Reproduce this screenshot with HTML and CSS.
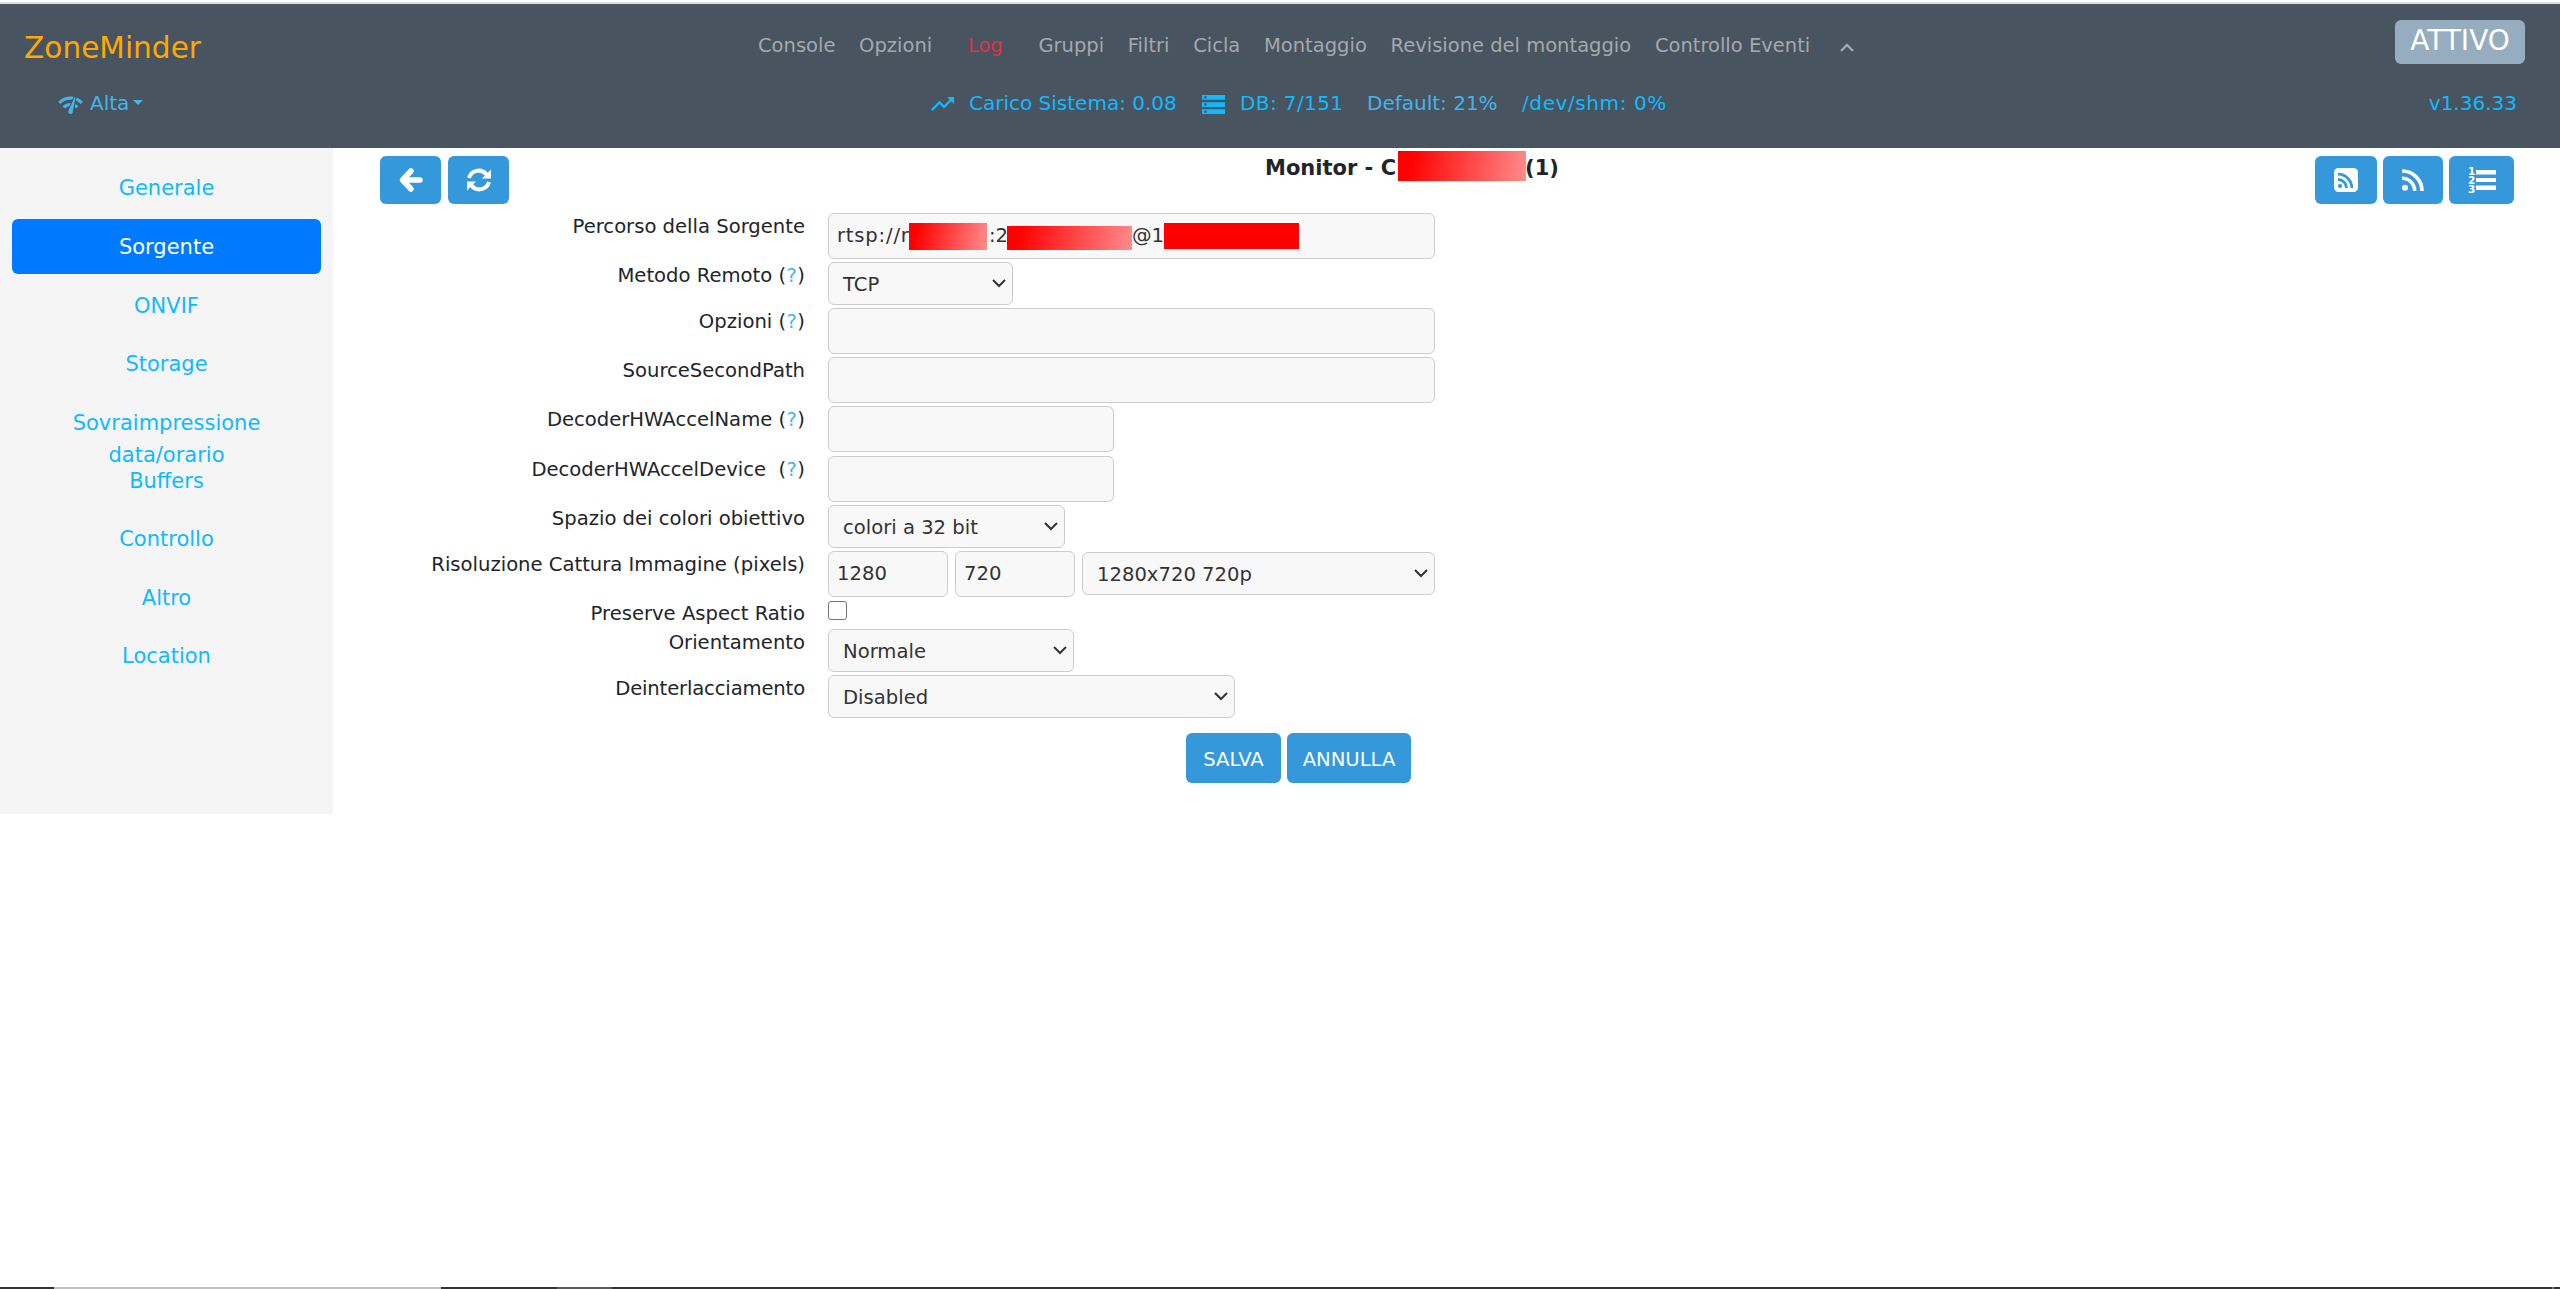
FILE: index.html
```
<!DOCTYPE html>
<html lang="it">
<head>
    <meta charset="UTF-8">
    <title>ZoneMinder - Monitor</title>
    <link rel="stylesheet" href="styles.css">
</head>
<body>
    <header id="header">
        <div class="row navRow">
            <a class="brand">ZoneMinder</a>
            <ul class="nav">
                <li>Console</li>
                <li>Opzioni</li>
                <li class="log">Log</li>
                <li>Gruppi</li>
                <li>Filtri</li>
                <li>Cicla</li>
                <li>Montaggio</li>
                <li>Revisione del montaggio</li>
                <li>Controllo Eventi</li>
                <li class="flip"><svg width="14" height="9" viewBox="0 0 14 9"><path d="M1 8l6-6 6 6" fill="none" stroke="currentColor" stroke-width="2.4"/></svg></li>
            </ul>
            <span class="state">ATTIVO</span>
        </div>
        <div class="row statRow">
            <div class="bandwidth">
                <svg width="25" height="18" viewBox="1 4 22 16"><path fill="currentColor" d="M15.900 5c-.170 0-.320.090-.410.230l-.070.150-5.180 11.650c-.160.290-.260.610-.260.960 0 1.110.900 2.010 2.010 2.010.960 0 1.770-.680 1.960-1.590l.010-.030L16.400 5.500c0-.280-.220-.500-.500-.500zM1 9l2 2c2.880-2.880 6.790-4.080 10.530-3.620l1.190-2.680C9.890 3.840 4.740 5.270 1 9zm20 2l2-2c-1.640-1.640-3.550-2.820-5.590-3.570l-.530 2.820c1.500.620 2.900 1.530 4.120 2.750zm-4 4l2-2c-.800-.800-1.700-1.420-2.660-1.890l-.550 2.920c.420.270.830.590 1.210.970zM5 13l2 2c1.130-1.130 2.560-1.790 4.030-2l1.280-2.880c-2.630-.080-5.300.870-7.310 2.880z"/></svg>
                <span>Alta</span>
                <i class="caret"></i>
            </div>
            <div class="stats">
                <svg class="trend" width="23" height="14" viewBox="2 6 20 12"><path fill="currentColor" d="M16 6l2.290 2.290-4.880 4.880-4-4L2 16.590 3.410 18l6-6 4 4 6.300-6.290L22 12V6z"/></svg>
                <span class="load">Carico Sistema: 0.08</span>
                <svg class="storage" width="23" height="19" viewBox="2 4 20 16" preserveAspectRatio="none"><path fill="currentColor" d="M2 20h20v-4H2v4zm2-3h2v2H4v-2zM2 4v4h20V4H2zm4 3H4V5h2v2zm-4 7h20v-4H2v4zm2-3h2v2H4v-2z"/></svg>
                <span class="db">DB: 7/151</span>
                <span class="disk">Default: 21%</span>
                <span class="shm">/dev/shm: 0%</span>
            </div>
            <span class="version">v1.36.33</span>
        </div>
    </header>
    <div id="page">
        <ul id="sidebar">
            <li>Generale</li>
            <li class="active">Sorgente</li>
            <li>ONVIF</li>
            <li>Storage</li>
            <li>Sovraimpressione data/orario</li>
            <li>Buffers</li>
            <li>Controllo</li>
            <li>Altro</li>
            <li>Location</li>
        </ul>
        <div id="content">
            <div class="toolbar">
                <div class="buttons">
                    <button class="back"><svg width="24" height="24" viewBox="0 0 24 24"><path d="M12 3L3.500 12l8.500 9M5 12h16" fill="none" stroke="#fff" stroke-width="5.500" stroke-linejoin="round" stroke-linecap="round"/></svg></button>
                    <button class="refresh"><svg width="24" height="24" viewBox="0 0 24 24"><g fill="none" stroke="#fff" stroke-width="4"><path d="M2 10A10 10 0 0 1 19.500 6.500"/><path d="M22 14A10 10 0 0 1 4.500 17.500"/></g><path d="M24 1.500V10.500H15zM0 22.500V13.500H9z" fill="#fff"/></svg></button>
                </div>
                <h2>Monitor - C<span class="mask maskName"></span><span class="num">(1)</span></h2>
                <div class="buttons feeds">
                    <button><svg width="24" height="24" viewBox="0 0 24 24"><rect width="24" height="24" rx="4.500" fill="#fff"/><g fill="none" stroke="#3498db" stroke-width="2.800"><path d="M4 11.500a8.500 8.500 0 0 1 8.500 8.500"/><path d="M4 6.200A13.800 13.800 0 0 1 17.800 20"/></g><circle cx="6" cy="18" r="2.100" fill="#3498db"/></svg></button>
                    <button class="rss"><svg width="22" height="22" viewBox="0 0 22 22"><g fill="none" stroke="#fff" stroke-width="3.600"><path d="M0 9.300A12.700 12.700 0 0 1 12.700 22"/><path d="M0 2A20 20 0 0 1 20 22"/></g><circle cx="3" cy="18.800" r="3" fill="#fff"/></svg></button>
                    <button class="list"><svg width="28" height="28" viewBox="0 0 28 28"><path d="M8 4h20v4.500H8zM8 12h20v4H8zM8 19.500h20V24H8z" fill="#fff"/><text x="0" y="8.500">1</text><text x="0" y="17.500">2</text><text x="0" y="27">3</text></svg></button>
                </div>
            </div>
            <div class="form">
                <div class="field h49">
                    <label>Percorso della Sorgente</label>
                    <div class="input long path"><span class="t1">rtsp://r</span><span class="mask m1"></span><span class="t2">:2</span><span class="mask m2"></span><span class="t3">@1</span><span class="mask m3"></span></div>
                </div>
                <div class="field h46">
                    <label>Metodo Remoto (<a>?</a>)</label>
                    <div class="select method">TCP<svg class="arrow" viewBox="0 0 14 9"><path d="M1 1l6 6 6-6"/></svg></div>
                </div>
                <div class="field h49">
                    <label>Opzioni (<a>?</a>)</label>
                    <div class="input long"></div>
                </div>
                <div class="field h49">
                    <label>SourceSecondPath</label>
                    <div class="input long"></div>
                </div>
                <div class="field h50">
                    <label>DecoderHWAccelName (<a>?</a>)</label>
                    <div class="input medium"></div>
                </div>
                <div class="field h49">
                    <label>DecoderHWAccelDevice&nbsp; (<a>?</a>)</label>
                    <div class="input medium"></div>
                </div>
                <div class="field h46">
                    <label>Spazio dei colori obiettivo</label>
                    <div class="select colours">colori a 32 bit<svg class="arrow" viewBox="0 0 14 9"><path d="M1 1l6 6 6-6"/></svg></div>
                </div>
                <div class="field h49">
                    <label>Risoluzione Cattura Immagine (pixels)</label>
                    <div class="size">
                        <div class="input short">1280</div>
                        <div class="input short">720</div>
                        <div class="select resolution">1280x720 720p<svg class="arrow" viewBox="0 0 14 9"><path d="M1 1l6 6 6-6"/></svg></div>
                    </div>
                </div>
                <div class="field h29">
                    <label>Preserve Aspect Ratio</label>
                    <div class="checkbox"></div>
                </div>
                <div class="field h46">
                    <label>Orientamento</label>
                    <div class="select orientation">Normale<svg class="arrow" viewBox="0 0 14 9"><path d="M1 1l6 6 6-6"/></svg></div>
                </div>
                <div class="field h46">
                    <label class="tight">Deinterlacciamento</label>
                    <div class="select deinterlace">Disabled<svg class="arrow" viewBox="0 0 14 9"><path d="M1 1l6 6 6-6"/></svg></div>
                </div>
            </div>
            <div class="actions">
                <button class="save">SALVA</button>
                <button class="cancel">ANNULLA</button>
            </div>
        </div>
    </div>
    <footer id="taskbar">
        <i class="search"></i>
        <i class="task"></i>
        <i class="desktop"></i>
    </footer>
</body>
</html>
```
FILE: styles.css
```
*{
    margin: 0;
    padding: 0;
    box-sizing: border-box;
}
ul{
    list-style: none;
}
body{
    height: 1289px;
    display: flex;
    flex-direction: column;
    overflow: hidden;
    background: #fff;
    color: #212529;
    font-family: Verdana, "DejaVu Sans", sans-serif;
    font-size: 19.6px;
}
svg{
    display: block;
    flex: none;
    overflow: visible;
}

/* header */
#header{
    height: 146px;
    margin-top: 2px;
    border-top: 2px solid #ddd;
    background: #485460;
}
.row{
    display: flex;
}
.navRow{
    height: 80px;
    padding: 16px 35px 0 24px;
}
.brand{
    width: 734px;
    font-size: 29.6px;
    line-height: 56px;
    color: #ffa801;
}
.nav{
    display: flex;
    gap: 23.7px;
    flex: 1;
    font-size: 19.5px;
    line-height: 52px;
    color: #a3a9ae;
}
.nav li{
    white-space: nowrap;
}
.nav .log{
    padding: 0 12px;
    color: #dc3545;
}
.nav .flip{
    padding: 23px 0 0 6px;
}
.state{
    width: 130px;
    height: 44px;
    border-radius: 6px;
    background: #95adbf;
    color: #fff;
    font-size: 28px;
    line-height: 41px;
    text-align: center;
}
.statRow{
    color: #11b9ff;
    font-size: 20px;
    line-height: 30px;
    padding: 4px 43px 0 58px;
}
.bandwidth{
    display: flex;
    width: 873px;
    color: #45b4ea;
}
.bandwidth svg{
    margin: 8px 7px 0 0;
}
.caret{
    border: 5px solid transparent;
    border-top-color: #45b4ea;
    border-bottom: 0;
    height: 5px;
    margin: 12px 0 0 4px;
}
.stats{
    display: flex;
    flex: 1;
    white-space: nowrap;
}
.trend{
    margin-top: 9px;
}
.load{
    width: 234px;
    padding-left: 15px;
}
.storage{
    margin: 7px 15px 0 14px;
}
.db{
    width: 127px;
    letter-spacing: 0.4px;
}
.disk{
    width: 155px;
    color: #45b4ea;
}
.shm{
    letter-spacing: 0.6px;
}

/* page */
#page{
    display: flex;
    height: 666px;
}
#sidebar{
    width: 333px;
    padding: 12px 12px 0;
    background: #f5f5f5;
    font-size: 21px;
    color: #11b9ff;
    text-align: center;
}
#sidebar li{
    height: 58.4px;
    padding: 12px 50px;
    line-height: 32px;
    border-radius: 6px;
}
#sidebar .active{
    height: 55px;
    margin: 1px 0 3.4px;
    background: #007bff;
    color: #fff;
}
#content{
    flex: 1;
    padding: 8px 46px 0 47px;
}
.toolbar{
    display: flex;
    height: 57px;
}
.buttons{
    display: flex;
    gap: 7px;
    width: 885px;
}
button{
    display: flex;
    align-items: center;
    justify-content: center;
    border: 0;
    border-radius: 6px;
    background: #3498db;
    color: #fff;
    font-family: inherit;
    font-size: 19.6px;
}
.toolbar button{
    width: 61px;
    height: 48px;
}
.feeds{
    width: auto;
    gap: 6px;
    margin-left: auto;
}
.toolbar .feeds button{
    width: 62px;
}
.toolbar .feeds .rss{
    width: 60px;
}
.toolbar .feeds .list{
    width: 65px;
}
.list text{
    font: bold 10.5px "DejaVu Sans", sans-serif;
    fill: #fff;
}
.toolbar h2{
    display: flex;
    font-size: 21px;
    line-height: 24px;
    white-space: nowrap;
}
.mask{
    flex: none;
    position: relative;
    z-index: 1;
    background: linear-gradient(100deg, #f00 10%, #ff8c8c);
}
.maskName{
    width: 128px;
    height: 30px;
    margin: -5px 0 0 2px;
}
.num{
    margin-left: -1px;
}

/* form */
.form{
    margin-left: 4px;
}
.field{
    display: flex;
    align-items: flex-start;
}
.h29{
    height: 29px;
}
.h46{
    height: 46px;
}
.h49{
    height: 49px;
}
.h50{
    height: 50px;
}
.field label{
    width: 421px;
    margin-right: 23px;
    line-height: 28px;
    text-align: right;
    white-space: nowrap;
}
.field .tight{
    letter-spacing: -0.15px;
}
.field label a{
    color: #45b4ea;
    padding: 0 0.4px;
}
.input, .select{
    display: flex;
    border: 1px solid #ccc;
    border-radius: 6px;
    background: #f8f8f8;
    color: #333;
}
.input{
    height: 46px;
    padding-left: 8px;
    line-height: 44px;
}
.select{
    height: 43px;
    padding: 0 6px 0 14px;
    line-height: 43px;
    justify-content: space-between;
}
.arrow{
    width: 14px;
    height: 9px;
    margin-top: 16px;
    fill: none;
    stroke: #333;
    stroke-width: 2;
}
.long{
    width: 607px;
}
.medium{
    width: 286px;
}
.short{
    width: 120px;
}
.method{
    width: 185px;
}
.colours{
    width: 237px;
}
.resolution{
    width: 353px;
    margin: 1px 0 0;
}
.orientation{
    width: 246px;
}
.deinterlace{
    width: 407px;
}
.size{
    display: flex;
    gap: 7px;
}
.checkbox{
    width: 19px;
    height: 19px;
    margin-top: 1px;
    border: 1.5px solid #767676;
    border-radius: 3px;
}
.path .t1{
    width: 72px;
    letter-spacing: 0.8px;
}
.path .t2{
    width: 20px;
    padding-left: 2px;
}
.path .t3{
    width: 32px;
}
.m1{
    width: 78px;
    height: 27px;
    margin-top: 9px;
}
.m2{
    width: 125px;
    height: 24px;
    margin-top: 12px;
}
.m3{
    width: 135px;
    height: 26px;
    margin-top: 9px;
    background: #f00;
}
.actions{
    display: flex;
    gap: 6px;
    margin: 12px 0 0 806px;
}
.actions button{
    height: 50px;
    padding-top: 2px;
}
.save{
    width: 95px;
}
.cancel{
    width: 124px;
}

/* strip of the desktop taskbar */
#taskbar{
    display: flex;
    height: 2px;
    margin-top: auto;
    background: #333;
}
.search{
    width: 387px;
    margin-left: 54px;
    background: #c0c0c0;
}
.task{
    width: 55px;
    margin-left: 116px;
    background: #5a5a5a;
}
.desktop{
    width: 2px;
    margin: 0 6px 0 auto;
    background: #777;
}
```
